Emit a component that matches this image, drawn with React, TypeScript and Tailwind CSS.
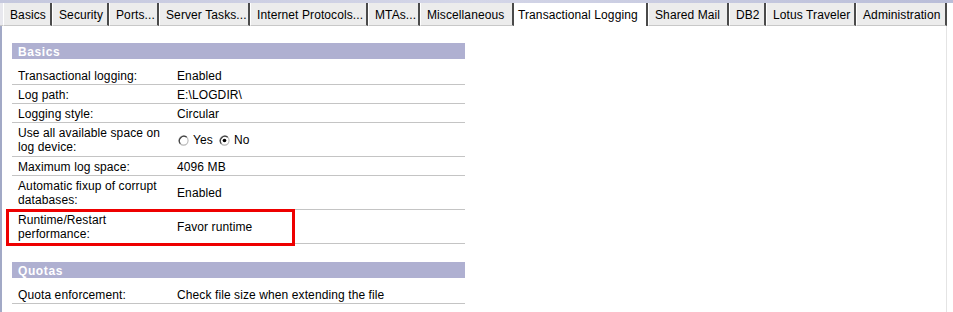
import React from "react";

const tabs: { label: string; w: number; active?: boolean }[] = [
  { label: "Basics", w: 49 },
  { label: "Security", w: 57 },
  { label: "Ports...", w: 50 },
  { label: "Server Tasks...", w: 91 },
  { label: "Internet Protocols...", w: 118 },
  { label: "MTAs...", w: 52 },
  { label: "Miscellaneous", w: 94 },
  { label: "Transactional Logging", w: 134, active: true },
  { label: "Shared Mail", w: 81 },
  { label: "DB2", w: 37 },
  { label: "Lotus Traveler", w: 90 },
  { label: "Administration", w: 91 },
];

function Radio({ checked }: { checked?: boolean }) {
  return (
    <svg width="11" height="11" viewBox="0 0 12 12" className="shrink-0">
      <circle cx="6" cy="6" r="5" fill="#ffffff" stroke="#b8b8b8" strokeWidth="1.2" />
      <path d="M2.5 9.5 A5 5 0 0 1 9.5 2.5" stroke="#404040" strokeWidth="1.3" fill="none" />
      {checked && <circle cx="6" cy="6" r="2" fill="#000000" />}
    </svg>
  );
}

function Row({
  label,
  children,
  tall,
  first,
}: {
  label: string;
  children: React.ReactNode;
  tall?: boolean;
  first?: boolean;
}) {
  return (
    <div
      className={`flex items-center pt-[1px] border-b border-[#c4c4c4] ${tall ? "h-[34px]" : "h-[19px]"} ${first ? "mt-[7px]" : ""}`}
    >
      <div className="w-[165px] shrink-0 pl-[6px]">
        <div className="w-[145px] leading-[14px]">{label}</div>
      </div>
      <div className="flex items-center leading-[14px]">{children}</div>
    </div>
  );
}

function Header({ title }: { title: string }) {
  return (
    <div className="h-[16px] bg-[#afb0d1] pl-[6px] pt-[1px] flex items-center text-white font-bold tracking-[0.6px] leading-none">
      {title}
    </div>
  );
}

export default function App() {
  return (
    <div
      className="w-[953px] h-[312px] bg-white overflow-hidden text-[12px] text-black tracking-[0.1px] flex flex-col"
      style={{ fontFamily: '"Liberation Sans", Arial, sans-serif' }}
    >
      <div className="h-[3px] shrink-0 bg-gradient-to-r from-[#c5c8de] via-[#d4d6e8] to-[#b9bdd8]" />
      <div className="flex h-[23px] shrink-0 bg-white">
        <div className="w-[3px] border-b border-[#c8c8c8] bg-[#e8e8ee]" />
        {tabs.map((t) => (
          <div
            key={t.label}
            style={{ width: t.w }}
            className={`shrink-0 flex items-center pt-[1px] whitespace-nowrap border-r-2 border-r-[#4a4a4a] border-l border-l-white ${
              t.active ? "bg-white pl-[3px]" : "bg-[#ececec] pl-[6px] border-b border-b-[#c8c8c8]"
            }`}
          >
            {t.label}
          </div>
        ))}
        <div className="flex-1 bg-white" />
      </div>
      <div className="flex flex-1">
        <div className="w-[2px] bg-[#a2a9c6] shrink-0" />
        <div className="relative pl-[10px] pt-[17px] w-[463px]">
          <Header title="Basics" />
          <Row label="Transactional logging:" first>
            Enabled
          </Row>
          <Row label="Log path:">E:\LOGDIR\</Row>
          <Row label="Logging style:">Circular</Row>
          <Row label="Use all available space on log device:" tall>
            <span className="flex items-center">
              <span className="ml-[1px]" />
              <Radio />
              <span className="ml-[4px]">Yes</span>
              <span className="ml-[6px]" />
              <Radio checked />
              <span className="ml-[4px]">No</span>
            </span>
          </Row>
          <Row label="Maximum log space:">4096 MB</Row>
          <Row label="Automatic fixup of corrupt databases:" tall>
            Enabled
          </Row>
          <div className="relative">
            <Row label="Runtime/Restart performance:" tall>
              Favor runtime
            </Row>
            <div className="absolute left-[-6px] top-[-1px] w-[289px] h-[37px] border-[3px] border-[#ee0000] pointer-events-none" />
          </div>
          <div className="h-[18px]" />
          <Header title="Quotas" />
          <Row label="Quota enforcement:" first>
            Check file size when extending the file
          </Row>
        </div>
        <div className="flex-1" />
        <div className="w-[1px] bg-[#e4e4e4] mr-[6px]" />
      </div>
    </div>
  );
}
